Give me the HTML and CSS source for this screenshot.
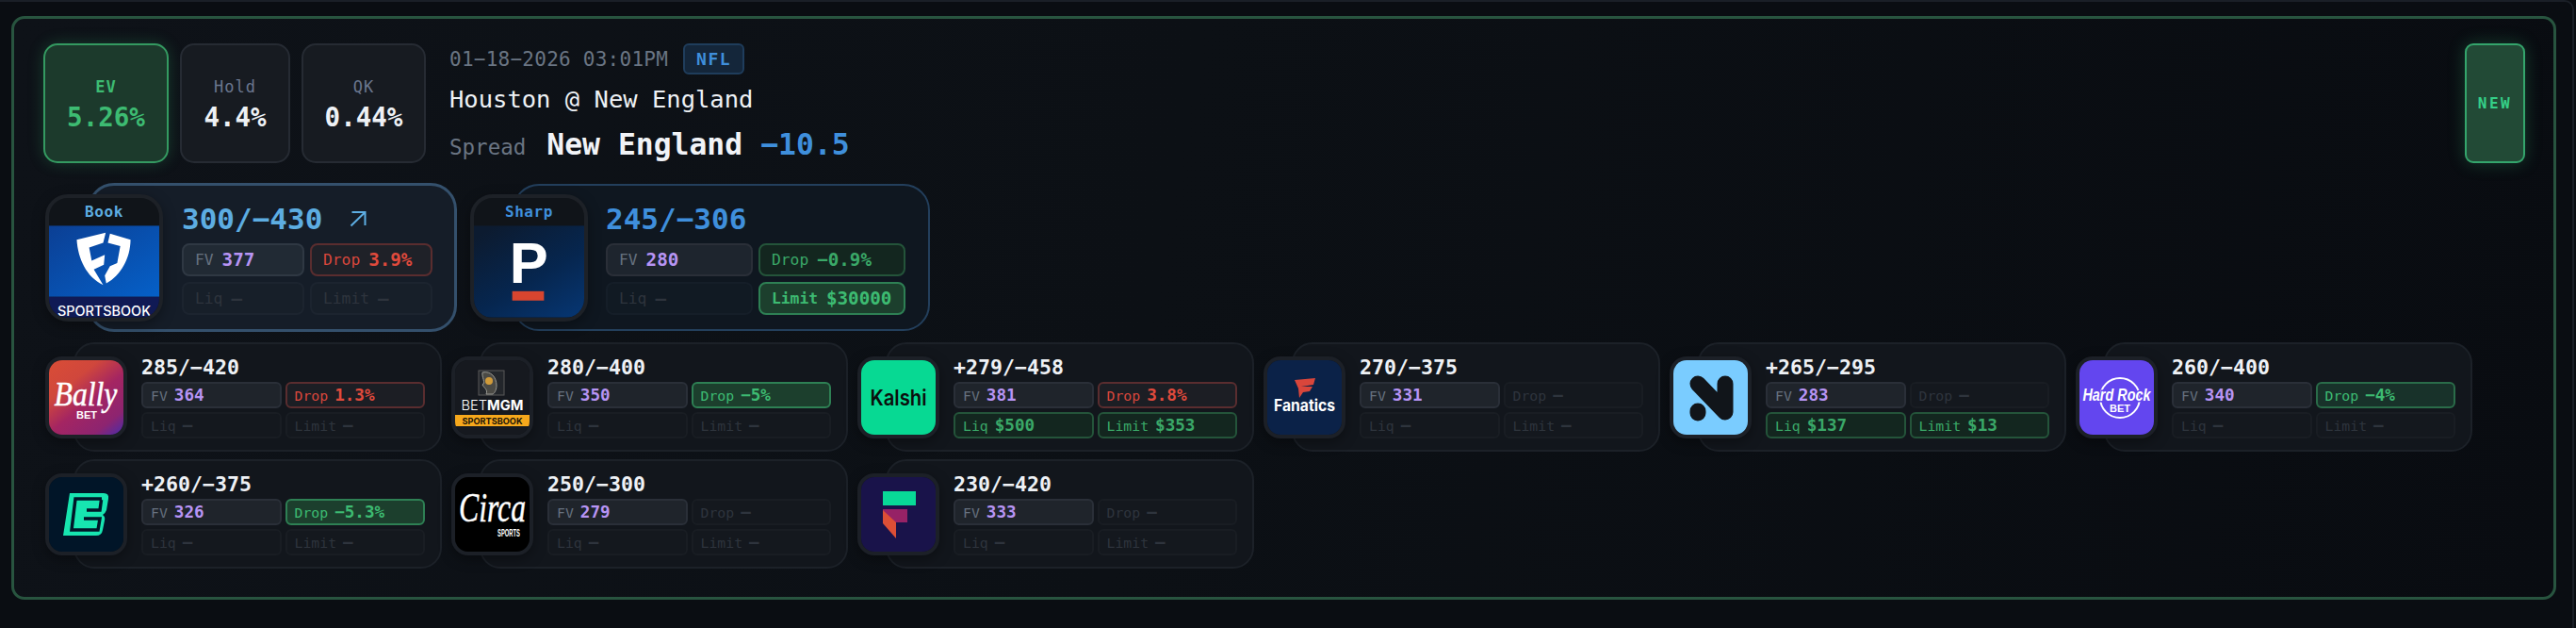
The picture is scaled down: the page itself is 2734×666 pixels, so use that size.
FILE: index.html
```html
<!DOCTYPE html>
<html lang="en">
<head>
<meta charset="utf-8">
<title>Odds</title>
<link rel="stylesheet" href="styles.css">
</head>
<body>
<div class="shell">
<main class="card">
  <header class="head">
    <div class="stat stat-ev"><span class="stat-label">EV</span><span class="stat-value">5.26%</span></div>
    <div class="stat stat-hold"><span class="stat-label">Hold</span><span class="stat-value">4.4%</span></div>
    <div class="stat stat-qk"><span class="stat-label">QK</span><span class="stat-value">0.44%</span></div>
    <div class="info">
      <div class="info-date"><span>01−18−2026 03:01PM</span><span class="league">NFL</span></div>
      <div class="info-game">Houston @ New England</div>
      <div class="info-pick"><span class="pick-type">Spread</span><span class="pick-team">New England</span><span class="pick-line">−10.5</span></div>
    </div>
    <div class="new-badge">NEW</div>
  </header>

  <section class="featured">
    <article class="tile tile-big tile-book">
      <div class="logo logo-big">
        <div class="logo-tag tag-book">Book</div>
        <svg class="logo-art" viewBox="0 0 118 98">
          <defs><linearGradient id="fd" x1="0" y1="0" x2="1" y2="1"><stop offset="0" stop-color="#0b3f94"/><stop offset="1" stop-color="#0560c8"/></linearGradient></defs>
          <rect width="118" height="76" fill="url(#fd)"/>
          <rect y="76" width="118" height="22" fill="#101a55"/>
          <path fill="#fff" d="M29.700 15 60.700 7.300 58 18.300 43 23.300 45.700 37.300 59.700 31 58.700 41.700 48 46.700 58 63.300C40 55 31 35 29.700 15Z"/>
          <path fill="#fff" d="M65.300 8.300 87.300 15C87 35 77 53 61.300 61.700L59.700 53.300 65.300 43.300 73 40 76.300 21.700 63 18.300Z"/>
          <text x="59" y="96" class="t-fd" textLength="100" lengthAdjust="spacingAndGlyphs">SPORTSBOOK</text>
        </svg>
      </div>
      <div class="panel panel-big panel-book">
        <div class="price price-big price-book">300/−430<svg class="arrow" viewBox="0 0 18 18"><path d="M1.500 16.500 16 2.500M2.500 2H16.500V16" fill="none" stroke="#5dade2" stroke-width="2"/></svg></div>
        <div class="chips chips-big">
          <div class="chip chip-fv"><span>FV</span><b>377</b></div>
          <div class="chip chip-bad"><span>Drop</span><b>3.9%</b></div>
          <div class="chip chip-off"><span>Liq</span><b>—</b></div>
          <div class="chip chip-off"><span>Limit</span><b>—</b></div>
        </div>
      </div>
    </article>

    <article class="tile tile-big tile-sharp">
      <div class="logo logo-big">
        <div class="logo-tag tag-sharp">Sharp</div>
        <svg class="logo-art" viewBox="0 0 118 98">
          <defs><linearGradient id="pin" x1="0.2" y1="0" x2="0.9" y2="1"><stop offset="0" stop-color="#0c1b30"/><stop offset=".55" stop-color="#06264f"/><stop offset="1" stop-color="#063570"/></linearGradient></defs>
          <rect width="118" height="98" fill="url(#pin)"/>
          <text x="38" y="61" class="t-pin">P</text>
          <rect x="41" y="70" width="34" height="10" fill="#d8452f"/>
        </svg>
      </div>
      <div class="panel panel-big panel-sharp">
        <div class="price price-big price-sharp">245/−306</div>
        <div class="chips chips-big">
          <div class="chip chip-fv"><span>FV</span><b>280</b></div>
          <div class="chip chip-good-dim"><span>Drop</span><b>−0.9%</b></div>
          <div class="chip chip-off"><span>Liq</span><b>—</b></div>
          <div class="chip chip-good chip-strong"><span>Limit</span><b>$30000</b></div>
        </div>
      </div>
    </article>
  </section>

  <section class="others">
    <article class="tile">
      <div class="logo logo-small">
        <svg class="logo-art" viewBox="0 0 79 79">
          <defs><linearGradient id="bally" x1="0.1" y1="0" x2="0.9" y2="1"><stop offset="0" stop-color="#d84c37"/><stop offset=".28" stop-color="#d0473c"/><stop offset=".55" stop-color="#a42562"/><stop offset=".85" stop-color="#8d2470"/><stop offset="1" stop-color="#5a2a9c"/></linearGradient></defs>
          <rect width="79" height="79" fill="url(#bally)"/>
          <text transform="translate(39 48) scale(.88 1)" class="t-script t-bally">Bally</text>
          <text x="40" y="62" class="t-sub">BET</text>
        </svg>
      </div>
      <div class="panel">
        <div class="price">285/−420</div>
        <div class="chips">
          <div class="chip chip-fv"><span>FV</span><b>364</b></div>
          <div class="chip chip-bad"><span>Drop</span><b>1.3%</b></div>
          <div class="chip chip-off"><span>Liq</span><b>—</b></div>
          <div class="chip chip-off"><span>Limit</span><b>—</b></div>
        </div>
      </div>
    </article>

    <article class="tile">
      <div class="logo logo-small">
        <svg class="logo-art" viewBox="0 0 79 79">
          <rect width="79" height="79" fill="#16191f"/>
          <rect x="25" y="11" width="27" height="26" fill="#23262b" stroke="#5a5a5a"/>
          <path d="M29 13C38 11 44 18 44 27 44 31 42 35 40 36H33C35 31 31 30 29 26 33 24 28 18 29 13Z" fill="#4b4a45" stroke="#9a9a94" stroke-width="1"/>
          <circle cx="36" cy="22" r="4" fill="#d19b3a"/>
          <text x="39.500" y="53" class="t-mgm" textLength="66" lengthAdjust="spacingAndGlyphs"><tspan class="t-mgm-thin">BET</tspan>MGM</text>
          <rect x="0" y="58" width="79" height="12" fill="#f6a81c"/>
          <text x="39.500" y="67.500" class="t-mgm-sub" textLength="64" lengthAdjust="spacingAndGlyphs">SPORTSBOOK</text>
        </svg>
      </div>
      <div class="panel">
        <div class="price">280/−400</div>
        <div class="chips">
          <div class="chip chip-fv"><span>FV</span><b>350</b></div>
          <div class="chip chip-good"><span>Drop</span><b>−5%</b></div>
          <div class="chip chip-off"><span>Liq</span><b>—</b></div>
          <div class="chip chip-off"><span>Limit</span><b>—</b></div>
        </div>
      </div>
    </article>

    <article class="tile">
      <div class="logo logo-small">
        <svg class="logo-art" viewBox="0 0 79 79">
          <rect width="79" height="79" fill="#07d993"/>
          <text x="39.500" y="48" class="t-kalshi" textLength="60" lengthAdjust="spacingAndGlyphs">Kalshi</text>
        </svg>
      </div>
      <div class="panel">
        <div class="price">+279/−458</div>
        <div class="chips">
          <div class="chip chip-fv"><span>FV</span><b>381</b></div>
          <div class="chip chip-bad"><span>Drop</span><b>3.8%</b></div>
          <div class="chip chip-good-dim"><span>Liq</span><b>$500</b></div>
          <div class="chip chip-good-dim"><span>Limit</span><b>$353</b></div>
        </div>
      </div>
    </article>

    <article class="tile">
      <div class="logo logo-small">
        <svg class="logo-art" viewBox="0 0 79 79">
          <rect width="79" height="79" fill="#0b2248"/>
          <path d="M29 21 51 19 49 26 36 28 48 28 45 33 38 34 34 40 33 30Z" fill="#d9463b"/>
          <text x="39.500" y="54" class="t-fanatics" textLength="65" lengthAdjust="spacingAndGlyphs">Fanatics</text>
        </svg>
      </div>
      <div class="panel">
        <div class="price">270/−375</div>
        <div class="chips">
          <div class="chip chip-fv"><span>FV</span><b>331</b></div>
          <div class="chip chip-off"><span>Drop</span><b>—</b></div>
          <div class="chip chip-off"><span>Liq</span><b>—</b></div>
          <div class="chip chip-off"><span>Limit</span><b>—</b></div>
        </div>
      </div>
    </article>

    <article class="tile">
      <div class="logo logo-small">
        <svg class="logo-art" viewBox="0 0 79 79">
          <rect width="79" height="79" fill="#7accff"/>
          <path d="M26 25 55 55V25M26 54V56" stroke="#11151a" stroke-width="17" stroke-linecap="round" stroke-linejoin="round" fill="none"/>
        </svg>
      </div>
      <div class="panel">
        <div class="price">+265/−295</div>
        <div class="chips">
          <div class="chip chip-fv"><span>FV</span><b>283</b></div>
          <div class="chip chip-off"><span>Drop</span><b>—</b></div>
          <div class="chip chip-good-dim"><span>Liq</span><b>$137</b></div>
          <div class="chip chip-good-dim"><span>Limit</span><b>$13</b></div>
        </div>
      </div>
    </article>

    <article class="tile">
      <div class="logo logo-small">
        <svg class="logo-art" viewBox="0 0 79 79">
          <rect width="79" height="79" fill="#6346ef"/>
          <circle cx="43" cy="40" r="21" fill="none" stroke="#fff" stroke-width="2"/>
          <text transform="translate(39.500 43) scale(.76 1)" class="t-hard">Hard Rock</text>
          <text x="43" y="55" class="t-sub">BET</text>
        </svg>
      </div>
      <div class="panel">
        <div class="price">260/−400</div>
        <div class="chips">
          <div class="chip chip-fv"><span>FV</span><b>340</b></div>
          <div class="chip chip-good-mid"><span>Drop</span><b>−4%</b></div>
          <div class="chip chip-off"><span>Liq</span><b>—</b></div>
          <div class="chip chip-off"><span>Limit</span><b>—</b></div>
        </div>
      </div>
    </article>

    <article class="tile">
      <div class="logo logo-small">
        <svg class="logo-art" viewBox="0 0 79 79">
          <rect width="79" height="79" fill="#011528"/>
          <path fill="#17e5b0" d="M22 17H58Q64 17 63 23L61 35Q60 38 57 40 60 42 59 46L57 56Q56 62 50 62H15Z"/>
          <path fill="none" stroke="#011528" stroke-width="3.500" d="M56 23H28L24 56H52L54 44H37M55.500 24 54 35H40"/>
        </svg>
      </div>
      <div class="panel">
        <div class="price">+260/−375</div>
        <div class="chips">
          <div class="chip chip-fv"><span>FV</span><b>326</b></div>
          <div class="chip chip-good"><span>Drop</span><b>−5.3%</b></div>
          <div class="chip chip-off"><span>Liq</span><b>—</b></div>
          <div class="chip chip-off"><span>Limit</span><b>—</b></div>
        </div>
      </div>
    </article>

    <article class="tile">
      <div class="logo logo-small">
        <svg class="logo-art" viewBox="0 0 79 79">
          <rect width="79" height="79" fill="#000"/>
          <text transform="translate(39.500 47) scale(.72 1)" class="t-script t-circa">Circa</text>
          <text transform="translate(57 63) scale(.58 1)" class="t-sub t-circa-sub">SPORTS</text>
        </svg>
      </div>
      <div class="panel">
        <div class="price">250/−300</div>
        <div class="chips">
          <div class="chip chip-fv"><span>FV</span><b>279</b></div>
          <div class="chip chip-off"><span>Drop</span><b>—</b></div>
          <div class="chip chip-off"><span>Liq</span><b>—</b></div>
          <div class="chip chip-off"><span>Limit</span><b>—</b></div>
        </div>
      </div>
    </article>

    <article class="tile">
      <div class="logo logo-small">
        <svg class="logo-art" viewBox="0 0 79 79">
          <rect width="79" height="79" fill="#19134a"/>
          <rect x="23" y="15" width="35" height="15" fill="#08d997"/>
          <rect x="23" y="34" width="26" height="14" fill="#962266"/>
          <path d="M23 35 37 48V65L23 49Z" fill="#dd4f36"/>
        </svg>
      </div>
      <div class="panel">
        <div class="price">230/−420</div>
        <div class="chips">
          <div class="chip chip-fv"><span>FV</span><b>333</b></div>
          <div class="chip chip-off"><span>Drop</span><b>—</b></div>
          <div class="chip chip-off"><span>Liq</span><b>—</b></div>
          <div class="chip chip-off"><span>Limit</span><b>—</b></div>
        </div>
      </div>
    </article>
  </section>
</main>
</div>
</body>
</html>
```

FILE: styles.css
```css
* { box-sizing: border-box; }

html, body { margin: 0; height: 666px; overflow: hidden; background: #0a0d12; }

body { font-family: "DejaVu Sans Mono", "Liberation Mono", monospace; color: #eef1f5; }

.shell {
  width: 2732px;
  height: 666px;
  padding: 15px 17px 0 12px;
  border-top: 2px solid #1a1f27;
  border-right: 2px solid #1a1f27;
  border-top-right-radius: 10px;
}

.card {
  width: 2701px;
  height: 619px;
  padding: 26px 30px 26px 31px;
  border: 3px solid #28543f;
  border-radius: 14px;
  background: linear-gradient(100deg, #0e1218 0%, #0c1015 45%, #090c11 100%);
}

/* header */
.head { display: flex; height: 127px; gap: 12px; }

.stat {
  display: flex;
  flex-direction: column;
  align-items: center;
  justify-content: center;
  gap: 6px;
  padding-top: 3px;
  border: 2px solid #262b33;
  border-radius: 15px;
  background: #171b21;
}
.stat-ev { width: 133px; background: #1c3a2c; border-color: #349a61; box-shadow: 0 0 16px rgba(50, 170, 105, .28); }
.stat-hold { width: 117px; }
.stat-qk { width: 132px; }
.stat-label { font-size: 17px; line-height: 20px; letter-spacing: 1px; color: #6a768e; }
.stat-ev .stat-label { color: #3dbb72; font-weight: 700; }
.stat-value { font-size: 27.500px; line-height: 32px; font-weight: 700; color: #eef1f5; }
.stat-ev .stat-value { color: #3dbb72; }

.info { margin-left: 13px; display: flex; flex-direction: column; }
.info-date { display: flex; align-items: center; gap: 16px; height: 33px; font-size: 21px; letter-spacing: .25px; color: #6a7583; }
.league {
  display: flex; align-items: center;
  height: 33px; padding: 0 12px;
  font-size: 18px; font-weight: 700; letter-spacing: 1.500px;
  color: #3f8fdc; background: #14263a; border: 2px solid #1f3d5c; border-radius: 6px;
}
.info-game { margin-top: 11px; font-size: 25.500px; line-height: 30px; color: #eef1f5; }
.info-pick { display: flex; align-items: baseline; margin-top: 14px; line-height: 38px; }
.pick-type { font-size: 22.500px; color: #6a7583; margin-right: 22px; }
.pick-team { font-size: 31.400px; font-weight: 700; color: #f1f3f7; margin-right: 19px; }
.pick-line { font-size: 31.400px; font-weight: 700; color: #3f8fdc; }

.new-badge {
  display: flex; align-items: center; justify-content: center;
  width: 64px; margin-left: auto;
  font-size: 16px; font-weight: 700; letter-spacing: 2.500px;
  color: #35d088; background: #224a36; border: 2px solid #34a56c; border-radius: 9px;
  box-shadow: 0 0 18px rgba(50, 170, 110, .3);
}

/* tiles */
.tile { position: relative; display: flex; align-items: center; }

.logo {
  position: relative; z-index: 1;
  flex: none;
  overflow: hidden;
  background: #101419;
  box-shadow: 0 4px 14px rgba(0, 0, 0, .35);
}
.logo-art { display: block; }

.logo-big { display: flex; flex-direction: column; width: 125px; height: 135px; border: 4px solid #1d2127; border-radius: 24px; }
.logo-big .logo-art { width: 117px; height: 98px; flex: none; }
.logo-tag { flex: none; height: 29px; font-size: 16px; font-weight: 700; line-height: 29px; text-align: center; letter-spacing: .6px; }
.tag-book { color: #5dade2; }
.tag-sharp { color: #3f8fdc; }

.logo-small { width: 87px; height: 87px; border: 4px solid #1c2027; border-radius: 18px; }
.logo-small .logo-art { width: 79px; height: 79px; }

.panel {
  flex: 1;
  margin-left: -57px;
  padding: 13px 16px 12px 70px;
  height: 116px;
  border: 2px solid #1c2128;
  border-radius: 22px;
  background: #12161c;
}
.panel-big { margin-left: -80px; height: 156px; padding: 17px 24px 14px 97px; border-radius: 28px; }
.panel-book { height: 158px; padding: 17px 23px 15px 97px; border: 3px solid #34506c; background: #151d28; }
.panel-sharp { background: #0f1720; border-color: #233f5c; }

.price { font-size: 21.600px; line-height: 24px; font-weight: 700; margin-bottom: 3px; color: #eef1f5; }
.price-big { display: flex; align-items: center; font-size: 31px; line-height: 36px; margin-bottom: 8px; }
.price-book { color: #5dade2; }
.price-sharp { color: #3f8fdc; }
.arrow { width: 18px; height: 18px; margin-left: 29px; }

.chips { display: grid; grid-template-columns: 1fr 1fr; grid-auto-rows: 28px; gap: 4px; }
.chips-big { grid-auto-rows: 35px; gap: 6px; }

.chip {
  display: flex; align-items: center; gap: 7px;
  padding: 0 8px;
  font-size: 14.800px;
  border: 2px solid #2a2f38;
  border-radius: 6px;
  background: #1f242b;
  color: #66717f;
}
.chip b { font-size: 17.600px; font-weight: 700; }
.chips-big .chip { gap: 9px; padding: 0 12px; font-size: 16.300px; border-radius: 8px; }
.chips-big .chip b { font-size: 19.200px; }

.chip-fv b { color: #b794f4; }
.chip-bad { background: #1c1e24; border-color: #5a2d2f; color: #d9473c; }
.chip-bad b { color: #e04a3c; }
.chip-good { background: #1c3f2d; border-color: #2e8054; color: #3dbb72; }
.chip-strong span { font-weight: 700; }
.chip-good-mid { background: #18322a; border-color: #2a6c49; color: #3dbb72; }
.chip-good-dim { background: #13261f; border-color: #24543a; color: #3aa868; }
.chip-off { background: #14181e; border-color: #191d23; color: #2e343d; }
.chip-off b { font-weight: 700; }
.panel-book .chip-bad { background: #1f2128; }
.panel-book .chip-fv { background: #212a34; border-color: #2f3843; }
.panel-book .chip-off { background: #171f29; border-color: #1c242f; }
.panel-sharp .chip-off { background: #111a23; border-color: #151e28; }
.panel-sharp .chip-fv { background: #1e252e; }

/* layout of sections */
.featured { display: flex; gap: 14px; margin: 22px 0 0 2px; }
.tile-big { height: 156px; }
.tile-book { width: 437px; }
.tile-sharp { width: 488px; }

.others { display: grid; grid-template-columns: repeat(6, 421px); grid-auto-rows: 116px; gap: 8px 10px; margin: 12px 0 0 2px; }

/* logo type */
svg text { text-anchor: middle; fill: #fff; }
.t-fd { font-family: "Inter", sans-serif; font-size: 14px; font-weight: 500; }
.t-pin { font-family: "Liberation Sans", sans-serif; font-size: 62px; font-weight: 700; text-anchor: start; }
.t-script { font-family: "Liberation Serif", serif; font-style: italic; font-weight: 400; stroke: #fff; stroke-width: .5px; }
.t-bally { font-size: 36px; }
.t-sub { font-family: "Liberation Sans", sans-serif; font-size: 11px; font-weight: 700; }
.t-mgm { font-family: "Inter", sans-serif; font-size: 15px; font-weight: 700; }
.t-mgm-thin { font-weight: 300; }
.t-mgm-sub { font-family: "Inter", sans-serif; font-size: 9px; font-weight: 700; fill: #1a1408; }
.t-kalshi { font-family: "Inter", sans-serif; font-size: 23px; font-weight: 600; fill: #0b0f0d; }
.t-fanatics { font-family: "Inter", sans-serif; font-size: 17px; font-weight: 700; }
.t-hard { font-family: "Liberation Sans", sans-serif; font-style: italic; font-size: 19px; font-weight: 700; stroke: #6346ef; stroke-width: 3px; paint-order: stroke; }
.t-circa { font-size: 44px; }
.t-circa-sub { font-size: 10px; }
```
